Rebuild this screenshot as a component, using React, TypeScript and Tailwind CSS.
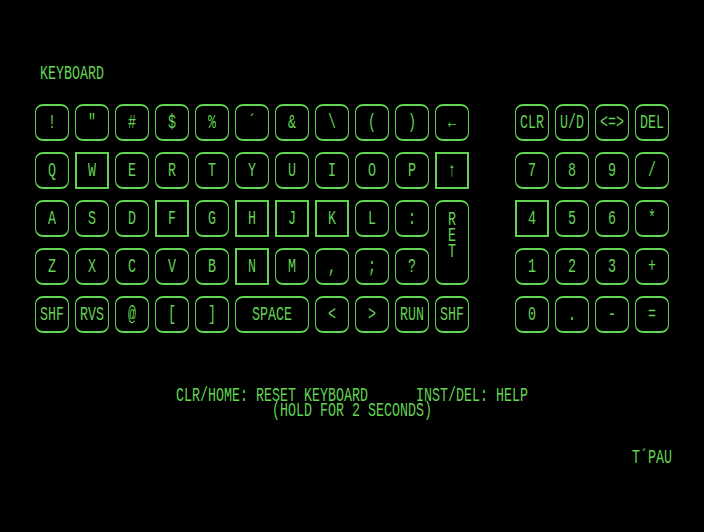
import React from 'react'

type KeyDef = {
    label: string
    box?: boolean
    span?: 'wide' | 'tall'
}

const left: KeyDef[] = [
    { label: '!' }, { label: '"' }, { label: '#' }, { label: '$' }, { label: '%' }, { label: '´' },
    { label: '&' }, { label: '\\' }, { label: '(' }, { label: ')' }, { label: '←' },
    { label: 'Q' }, { label: 'W', box: true }, { label: 'E' }, { label: 'R' }, { label: 'T' }, { label: 'Y' },
    { label: 'U' }, { label: 'I' }, { label: 'O' }, { label: 'P' }, { label: '↑', box: true },
    { label: 'A' }, { label: 'S' }, { label: 'D' }, { label: 'F', box: true }, { label: 'G' }, { label: 'H', box: true },
    { label: 'J', box: true }, { label: 'K', box: true }, { label: 'L' }, { label: ':' }, { label: 'RET', span: 'tall' },
    { label: 'Z' }, { label: 'X' }, { label: 'C' }, { label: 'V' }, { label: 'B' }, { label: 'N', box: true },
    { label: 'M' }, { label: ',' }, { label: ';' }, { label: '?' },
    { label: 'SHF' }, { label: 'RVS' }, { label: '@' }, { label: '[' }, { label: ']' }, { label: 'SPACE', span: 'wide' },
    { label: '<' }, { label: '>' }, { label: 'RUN' }, { label: 'SHF' },
]

const right: KeyDef[] = [
    { label: 'CLR' }, { label: 'U/D' }, { label: '<=>' }, { label: 'DEL' },
    { label: '7' }, { label: '8' }, { label: '9' }, { label: '/' },
    { label: '4', box: true }, { label: '5' }, { label: '6' }, { label: '*' },
    { label: '1' }, { label: '2' }, { label: '3' }, { label: '+' },
    { label: '0' }, { label: '.' }, { label: '-' }, { label: '=' },
]

// pixel font look: mono glyphs stretched tall
const Txt = ({ children }: { children: React.ReactNode }) => (
    <span className="block h-[13px] scale-y-150 whitespace-pre text-[13.33px] leading-[13px]">{children}</span>
)

const Key: React.FC<{ k: KeyDef }> = ({ k }) => {
    const shape = k.box
        ? 'border-y-2 border-x-2 rounded-none'
        : 'border-y-2 border-x rounded-[8px]'
    const span = k.span === 'wide' ? 'col-span-2' : k.span === 'tall' ? 'row-span-2' : ''
    return (
        <div className={`flex items-center justify-center border-[#62d453] ${shape} ${span}`}>
            {k.span === 'tall' ? (
                <div className="flex flex-col items-center gap-[3px] self-start pt-[11px]">
                    {k.label.split('').map((c, i) => <Txt key={i}>{c}</Txt>)}
                </div>
            ) : (
                <Txt>{k.label}</Txt>
            )}
        </div>
    )
}

export default function App() {
    return (
        <div className="flex h-[532px] w-[704px] flex-col bg-black font-['Liberation_Mono',monospace] text-[#62d453]">
            <div className="mt-[67px] flex pl-[40px]">
                <Txt>KEYBOARD</Txt>
            </div>

            <div className="mt-[24px] flex gap-[46px] pl-[35px]">
                <div className="grid grid-cols-[repeat(11,34px)] grid-rows-[repeat(5,37px)] gap-x-[6px] gap-y-[11px]">
                    {left.map((k, i) => <Key key={i} k={k} />)}
                </div>
                <div className="grid grid-cols-[repeat(4,34px)] grid-rows-[repeat(5,37px)] gap-x-[6px] gap-y-[11px]">
                    {right.map((k, i) => <Key key={i} k={k} />)}
                </div>
            </div>

            <div className="mt-[56px] flex flex-col items-center gap-[2px]">
                <Txt>{'CLR/HOME: RESET KEYBOARD      INST/DEL: HELP'}</Txt>
                <Txt>(HOLD FOR 2 SECONDS)</Txt>
            </div>

            <div className="mt-[34px] flex justify-end pr-[32px]">
                <Txt>T´PAU</Txt>
            </div>
        </div>
    )
}
